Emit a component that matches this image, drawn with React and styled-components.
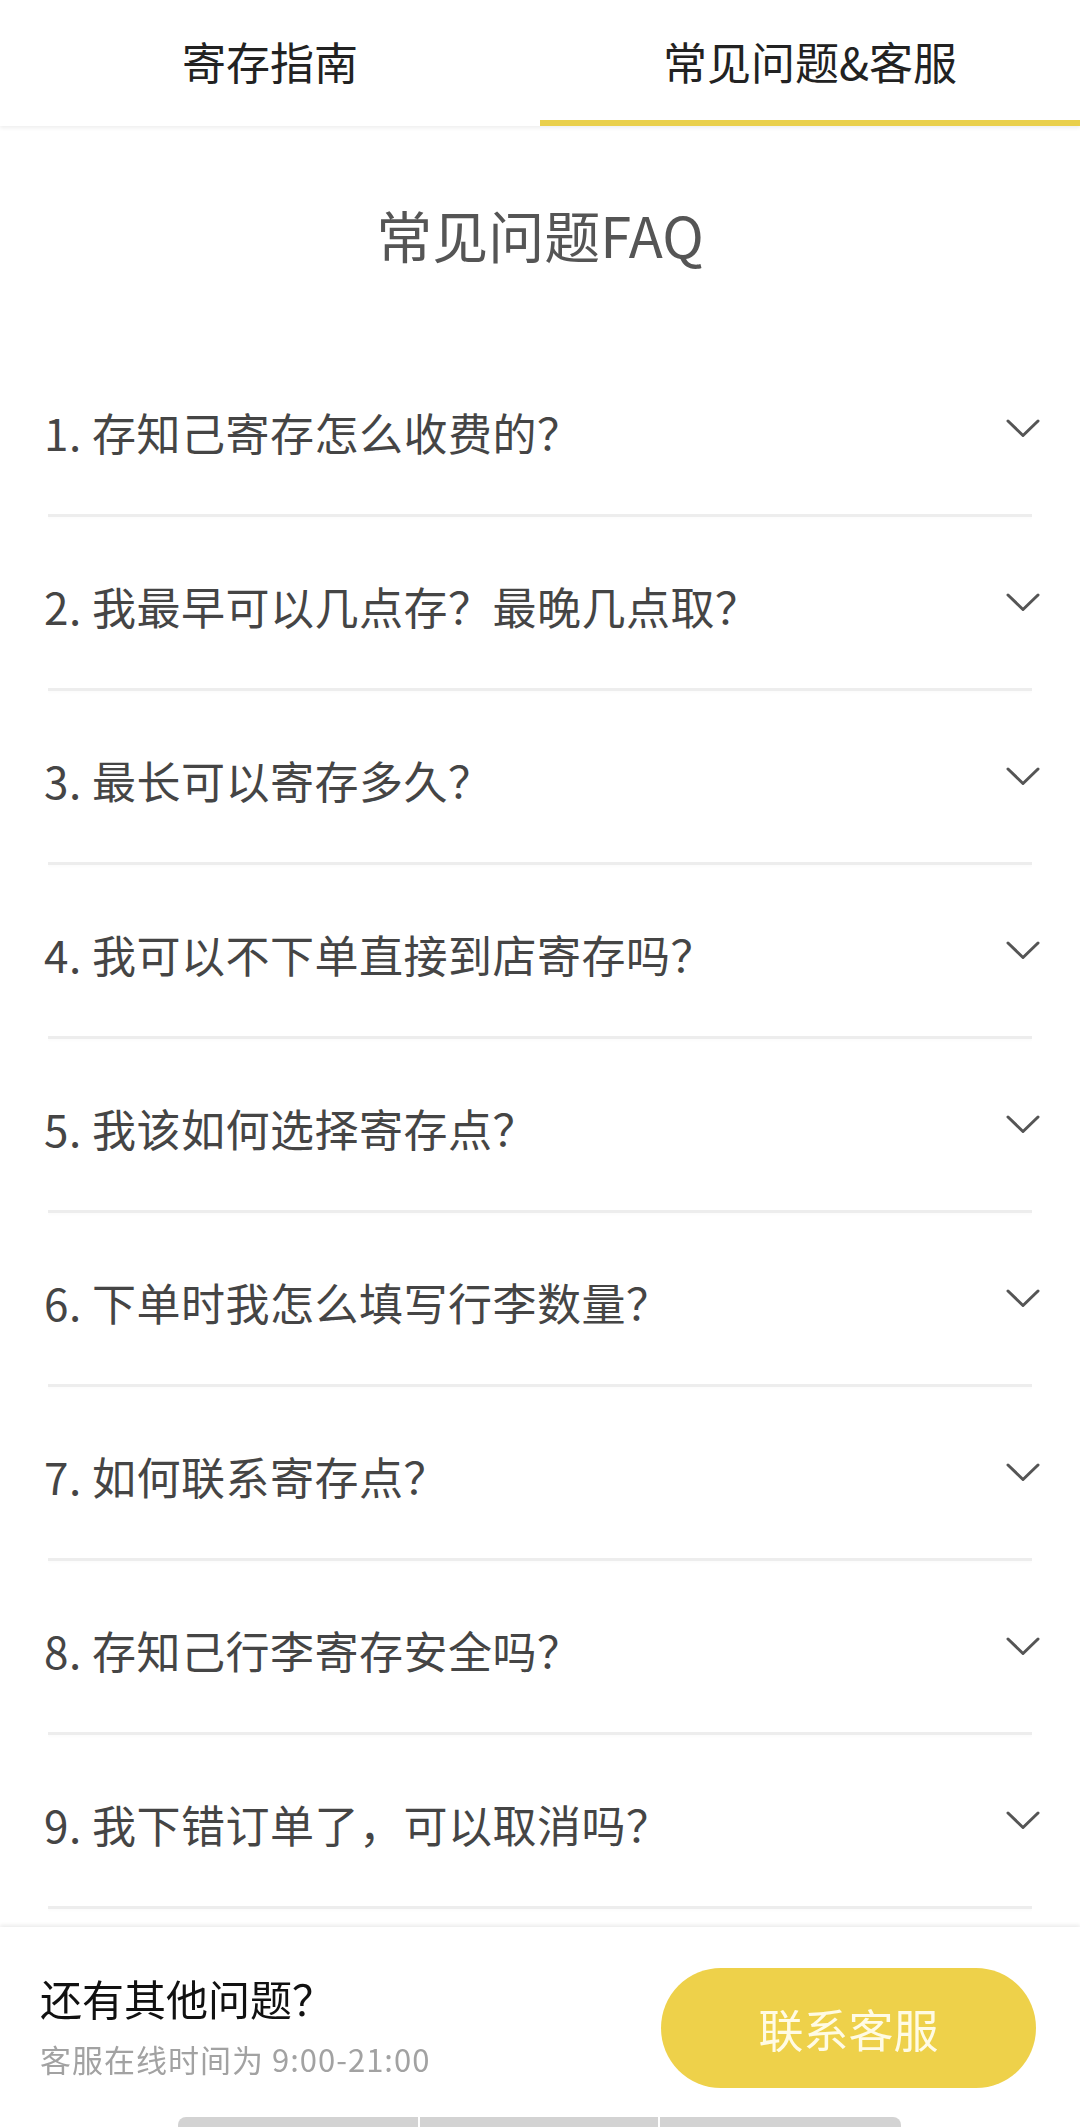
import React from "react";
import styled, { createGlobalStyle } from "styled-components";

const GlobalStyle = createGlobalStyle`
  html, body {
    margin: 0;
    padding: 0;
    background: #ffffff;
  }
  body {
    font-family: "Noto Sans CJK SC", "Noto Sans", sans-serif;
    -webkit-font-smoothing: antialiased;
  }
  * { box-sizing: border-box; }
`;

const Page = styled.div`
  width: 1080px;
  min-height: 2127px;
  padding-bottom: 220px;
  background: #fff;
  position: relative;
`;

const TabBar = styled.div`
  display: flex;
  height: 126px;
  background: #fff;
  box-shadow: 0 2px 4px rgba(0, 0, 0, 0.07);
  position: relative;
  z-index: 1;
`;

const Tab = styled.div`
  flex: 1;
  display: flex;
  align-items: center;
  justify-content: center;
  padding-top: 2px;
  font-size: 44px;
  color: #222;
  border-bottom: 6px solid ${(p) => (p.$active ? "#e9cf4b" : "transparent")};
`;

const Title = styled.h1`
  margin: 70px 0 71px;
  font-size: 56px;
  line-height: 76px;
  font-weight: 400;
  color: #555;
  text-align: center;
`;

const List = styled.div`
  display: flex;
  flex-direction: column;
`;

const Row = styled.div`
  display: flex;
  flex-direction: column;
`;

const RowHead = styled.div`
  height: 171px;
  display: flex;
  align-items: center;
  justify-content: space-between;
  padding: 6px 40px 0 44px;
`;

const Question = styled.span`
  font-size: 44px;
  color: #454545;
  letter-spacing: 0.5px;
`;

const Chevron = styled.svg`
  width: 34px;
  height: 19px;
  margin-top: -6px;
  flex: none;
`;

const Divider = styled.div`
  height: 3px;
  margin: 0 48px;
  background: #ededed;
  box-shadow: 0 2px 2px rgba(0, 0, 0, 0.015);
`;

const BottomBar = styled.div`
  position: fixed;
  left: 0;
  right: 0;
  bottom: 0;
  height: 200px;
  background: #fff;
  box-shadow: 0 -2px 4px rgba(0, 0, 0, 0.08);
  display: flex;
  flex-direction: column;
  z-index: 2;
`;

const BarContent = styled.div`
  display: flex;
  align-items: center;
  justify-content: space-between;
  padding: 41px 44px 0 40px;
`;

const Help = styled.div`
  display: flex;
  flex-direction: column;
  gap: 5px;
`;

const HelpTitle = styled.div`
  font-size: 42px;
  line-height: 56px;
  color: #111;
`;

const HelpSub = styled.div`
  font-size: 31px;
  line-height: 56px;
  letter-spacing: 1px;
  color: #a2a2a2;
`;

const ContactButton = styled.button`
  width: 375px;
  height: 120px;
  border: none;
  border-radius: 60px;
  background: #eed14a;
  color: #fffbe4;
  font-family: inherit;
  font-size: 45px;
  padding: 0;
  display: flex;
  align-items: center;
  justify-content: center;
`;

const Indicator = styled.div`
  margin: 29px 0 0 178px;
  width: 723px;
  height: 10px;
  display: flex;
  gap: 2px;
  border-radius: 8px 8px 0 0;
  overflow: hidden;
`;

const IndicatorSeg = styled.div`
  flex: ${(p) => p.$grow};
  background: #d3d3d3;
`;

const questions = [
  "1. 存知己寄存怎么收费的？",
  "2. 我最早可以几点存？最晚几点取？",
  "3. 最长可以寄存多久？",
  "4. 我可以不下单直接到店寄存吗？",
  "5. 我该如何选择寄存点？",
  "6. 下单时我怎么填写行李数量？",
  "7. 如何联系寄存点？",
  "8. 存知己行李寄存安全吗？",
  "9. 我下错订单了，可以取消吗？",
];

function ChevronDown() {
  return (
    <Chevron viewBox="0 0 34 19">
      <polyline
        points="2,2 17,16.5 32,2"
        fill="none"
        stroke="#555"
        strokeWidth="3"
        strokeLinecap="round"
        strokeLinejoin="round"
      />
    </Chevron>
  );
}

export default function App() {
  return (
    <>
      <GlobalStyle />
      <Page>
        <TabBar>
          <Tab>寄存指南</Tab>
          <Tab $active>常见问题&amp;客服</Tab>
        </TabBar>
        <Title>常见问题FAQ</Title>
        <List>
          {questions.map((q) => (
            <Row key={q}>
              <RowHead>
                <Question>{q}</Question>
                <ChevronDown />
              </RowHead>
              <Divider />
            </Row>
          ))}
        </List>
        <BottomBar>
          <BarContent>
            <Help>
              <HelpTitle>还有其他问题？</HelpTitle>
              <HelpSub>客服在线时间为 9:00-21:00</HelpSub>
            </Help>
            <ContactButton>联系客服</ContactButton>
          </BarContent>
          <Indicator>
            <IndicatorSeg $grow={240} />
            <IndicatorSeg $grow={238} />
            <IndicatorSeg $grow={241} />
          </Indicator>
        </BottomBar>
      </Page>
    </>
  );
}
